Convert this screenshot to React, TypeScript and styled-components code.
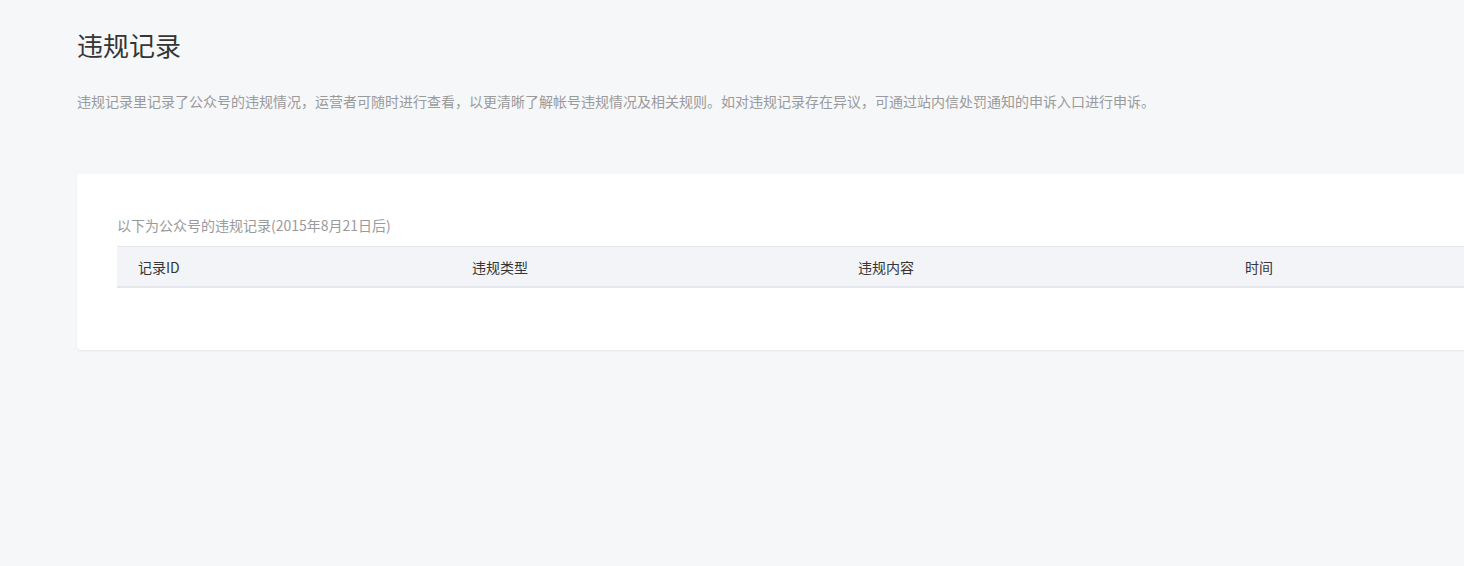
import styled, { createGlobalStyle } from "styled-components";

const GlobalStyle = createGlobalStyle`
  html, body {
    margin: 0;
    padding: 0;
    background: #f6f7f9;
    overflow: hidden;
  }
  body {
    font-family: "Noto Sans CJK SC", "Noto Sans", sans-serif;
    color: #353535;
  }
`;

const Page = styled.div`
  width: 1620px;
  min-height: 566px;
  padding: 23px 0 0 77px;
  box-sizing: border-box;
`;

const Title = styled.h2`
  margin: 0;
  font-size: 26px;
  font-weight: 400;
  line-height: 44px;
  color: #353535;
`;

const Desc = styled.p`
  margin: 23px 0 0;
  font-size: 14px;
  line-height: 22px;
  color: #9a9a9a;
`;

const Card = styled.section`
  margin-top: 62px;
  background: #fff;
  border-radius: 4px;
  box-shadow: 0 1px 2px rgba(150, 150, 150, 0.15);
  padding: 40px 40px 62px;
`;

const Caption = styled.div`
  font-size: 14px;
  line-height: 22px;
  color: #9a9a9a;
  margin-bottom: 10px;
`;

const HeaderRow = styled.div`
  display: grid;
  grid-template-columns: 334px 386px 387px 1fr;
  background: #f3f4f7;
  border-top: 1px solid #e4e6eb;
  border-bottom: 2px solid #e4e6eb;
  height: 39px;
  align-items: center;
`;

const HeadCell = styled.div`
  padding-left: 21px;
  font-size: 14px;
  color: #353535;
`;

const columns = ["记录ID", "违规类型", "违规内容", "时间"];

export default function App() {
  return (
    <>
      <GlobalStyle />
      <Page>
        <Title>违规记录</Title>
        <Desc>
          违规记录里记录了公众号的违规情况，运营者可随时进行查看，以更清晰了解帐号违规情况及相关规则。如对违规记录存在异议，可通过站内信处罚通知的申诉入口进行申诉。
        </Desc>
        <Card>
          <Caption>以下为公众号的违规记录(2015年8月21日后)</Caption>
          <HeaderRow role="row">
            {columns.map((c) => (
              <HeadCell key={c}>{c}</HeadCell>
            ))}
          </HeaderRow>
        </Card>
      </Page>
    </>
  );
}
